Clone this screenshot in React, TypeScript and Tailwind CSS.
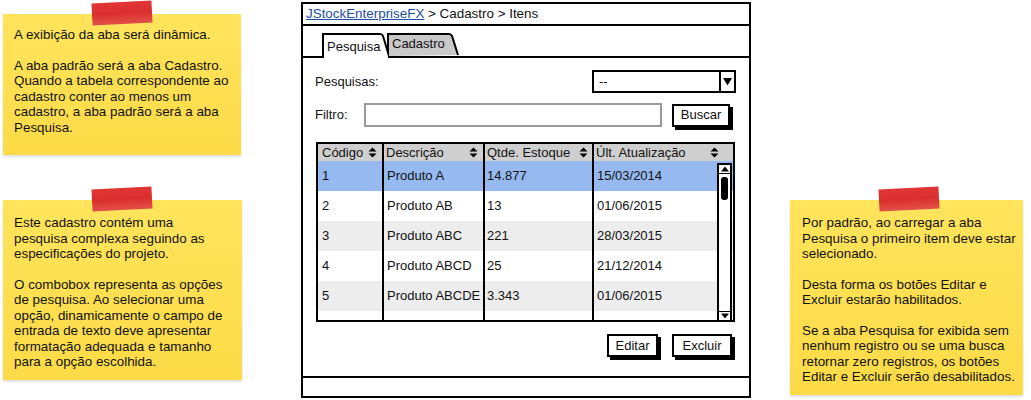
import React from 'react';

const rows = [
  { code: '1', desc: 'Produto A', qty: '14.877', date: '15/03/2014' },
  { code: '2', desc: 'Produto AB', qty: '13', date: '01/06/2015' },
  { code: '3', desc: 'Produto ABC', qty: '221', date: '28/03/2015' },
  { code: '4', desc: 'Produto ABCD', qty: '25', date: '21/12/2014' },
  { code: '5', desc: 'Produto ABCDE', qty: '3.343', date: '01/06/2015' },
  { code: '', desc: '', qty: '', date: '' },
];

function SortIcon() {
  return (
    <svg width="9" height="11" viewBox="0 0 9 11" className="shrink-0">
      <path d="M0.5 4.5 L4.5 0.5 L8.5 4.5 Z" fill="#000" />
      <path d="M0.5 6.5 L8.5 6.5 L4.5 10.5 Z" fill="#000" />
    </svg>
  );
}

function Tape({ left }: { left: string }) {
  return (
    <div
      className={`absolute -top-[12px] ${left} h-[22px] w-[60px] -rotate-[3deg] bg-gradient-to-b from-[#e02a2a] via-[#d92326] to-[#e0474a] opacity-95`}
    />
  );
}

function Note({
  className,
  tapeLeft,
  children,
}: {
  className: string;
  tapeLeft: string;
  children: React.ReactNode;
}) {
  return (
    <div
      className={`relative bg-gradient-to-b from-[#ffe45c] to-[#fddb47] shadow-[0_2px_2px_rgba(0,0,0,0.12)] ${className}`}
    >
      <Tape left={tapeLeft} />
      <div className="flex flex-col gap-[15px] text-[13.4px] leading-[15.5px]">{children}</div>
    </div>
  );
}

function SketchButton({ label, width }: { label: string; width: string }) {
  return (
    <div
      className={`flex h-[23px] ${width} items-center justify-center border-2 border-black bg-white shadow-[3px_3px_0_#000]`}
    >
      {label}
    </div>
  );
}

export default function App() {
  return (
    <div className="flex h-[400px] w-[1031px] overflow-hidden bg-white font-['Liberation_Sans',Arial,sans-serif] text-[13px] text-[#111]">
      {/* left notes */}
      <div className="flex w-[243px] shrink-0 flex-col pl-[3px]">
        <Note className="mt-[14px] h-[141px] w-[238px] pl-[11px] pt-[13px]" tapeLeft="left-[89px]">
          <p>A exibição da aba será dinâmica.</p>
          <p>
            A aba padrão será a aba Cadastro.
            <br />
            Quando a tabela correspondente ao
            <br />
            cadastro conter ao menos um
            <br />
            cadastro, a aba padrão será a aba
            <br />
            Pesquisa.
          </p>
        </Note>
        <Note className="mt-[45px] h-[180px] w-[239px] pl-[11px] pt-[15px]" tapeLeft="left-[89px]">
          <p>
            Este cadastro contém uma
            <br />
            pesquisa complexa seguindo as
            <br />
            especificações do projeto.
          </p>
          <p>
            O combobox representa as opções
            <br />
            de pesquisa. Ao selecionar uma
            <br />
            opção, dinamicamente o campo de
            <br />
            entrada de texto deve apresentar
            <br />
            formatação adequada e tamanho
            <br />
            para a opção escolhida.
          </p>
        </Note>
      </div>

      {/* window */}
      <div className="ml-[58px] mt-[2px] flex h-[396px] w-[450px] shrink-0 flex-col border-2 border-black bg-white">
        <div className="flex h-[22px] items-center border-b-2 border-black pl-[3px] text-[13.4px]">
          <span className="text-[#1d4ea3] underline">JStockEnterpriseFX</span>
          <span>&nbsp;&gt; Cadastro &gt; Itens</span>
        </div>

        {/* tabs */}
        <div className="flex h-[32px] items-end border-b-2 border-black pl-[19px]">
          <div className="relative z-10 -mb-[2px] flex h-[25px] w-[67px] items-center pl-[5px] pt-[2px]">
            <svg width="67" height="25" viewBox="0 0 67 25" className="absolute left-0 top-0">
              <path d="M1 25 L1 1 L58 1 Q60 1 61 3 L67 23 L67 25" fill="#fff" stroke="#000" strokeWidth="2" />
              <path d="M2 23 L66 23 L66 25 L2 25 Z" fill="#fff" />
            </svg>
            <span className="relative">Pesquisa</span>
          </div>
          <div className="relative -ml-[2px] flex h-[23px] w-[72px] items-center pb-[2px] pl-[5px]">
            <svg width="72" height="23" viewBox="0 0 72 23" className="absolute left-0 top-0">
              <path d="M1 23 L1 1 L62 1 Q64 1 65 3 L71 22" fill="#c9c9c9" stroke="#000" strokeWidth="2" />
            </svg>
            <span className="relative">Cadastro</span>
          </div>
        </div>

        {/* form */}
        <div className="mt-[12px] flex items-center justify-between pl-[12px] pr-[13px]">
          <span>Pesquisas:</span>
          <div className="flex h-[23px] w-[144px] border-2 border-black">
            <div className="flex flex-1 items-center pl-[5px]">--</div>
            <div className="flex w-[15px] items-center justify-center border-l-2 border-black">
              <svg width="9" height="9" viewBox="0 0 9 9">
                <path d="M0 1 L9 1 L4.5 8.5 Z" fill="#000" />
              </svg>
            </div>
          </div>
        </div>

        <div className="mt-[10px] flex items-center pl-[12px]">
          <span className="w-[49px]">Filtro:</span>
          <div className="h-[24px] w-[298px] border-2 border-[#9a9a9a] bg-white" />
          <div className="ml-[10px]">
            <SketchButton label="Buscar" width="w-[58px]" />
          </div>
        </div>

        {/* table */}
        <div className="relative ml-[13px] mt-[15px] h-[180px] w-[419px] overflow-hidden border-2 border-black">
          <div className="grid h-[17px] grid-cols-[66px_101px_109px_1fr] bg-[#cfcfcf] leading-[17px]">
            <div className="flex items-center justify-between border-r-2 border-black pl-[4px] pr-[5px]">
              <span>Código</span>
              <SortIcon />
            </div>
            <div className="flex items-center justify-between border-r-2 border-black pl-[2px] pr-[5px]">
              <span>Descrição</span>
              <SortIcon />
            </div>
            <div className="flex items-center justify-between border-r-2 border-black pl-[2px] pr-[4px]">
              <span>Qtde. Estoque</span>
              <SortIcon />
            </div>
            <div className="flex items-center justify-between pl-[2px] pr-[14px]">
              <span>Últ. Atualização</span>
              <SortIcon />
            </div>
          </div>
          {rows.map((r, i) => (
            <div
              key={i}
              className={`grid h-[30px] grid-cols-[66px_101px_109px_1fr] ${
                i === 0 ? 'bg-[#96baf0]' : i % 2 === 0 ? 'bg-[#ededed]' : 'bg-white'
              }`}
            >
              <div className="flex items-center border-r-2 border-black pl-[4px]">{r.code}</div>
              <div className="flex items-center border-r-2 border-black pl-[3px]">{r.desc}</div>
              <div className="flex items-center border-r-2 border-black pl-[2px]">{r.qty}</div>
              <div className="flex items-center pl-[3px]">{r.date}</div>
            </div>
          ))}

          {/* scrollbar */}
          <div className="absolute bottom-0 right-[1px] top-[19px] flex w-[15px] flex-col items-center border-2 border-b-0 border-black bg-white">
            <div className="flex h-[9px] w-full items-center justify-center border-b border-black">
              <svg width="8" height="6" viewBox="0 0 8 6">
                <path d="M0 5.5 L8 5.5 L4 0.5 Z" fill="#000" />
              </svg>
            </div>
            <div className="mt-[3px] h-[23px] w-[7px] rounded-[3px] bg-black" />
            <div className="flex-1" />
            <div className="flex h-[9px] w-full items-center justify-center border-t border-black">
              <svg width="8" height="6" viewBox="0 0 8 6">
                <path d="M0 0.5 L8 0.5 L4 5.5 Z" fill="#000" />
              </svg>
            </div>
          </div>
        </div>

        <div className="mt-[12px] flex justify-end gap-[14px] pr-[17px]">
          <SketchButton label="Editar" width="w-[51px]" />
          <SketchButton label="Excluir" width="w-[60px]" />
        </div>

        <div className="flex-1" />
        <div className="h-[20px] border-t-2 border-black" />
      </div>

      {/* right note */}
      <div className="ml-[39px] shrink-0">
        <Note className="mt-[200px] h-[195px] w-[233px] pl-[12px] pt-[15px]" tapeLeft="left-[89px]">
          <p>
            Por padrão, ao carregar a aba
            <br />
            Pesquisa o primeiro item deve estar
            <br />
            selecionado.
          </p>
          <p>
            Desta forma os botões Editar e
            <br />
            Excluir estarão habilitados.
          </p>
          <p>
            Se a aba Pesquisa for exibida sem
            <br />
            nenhum registro ou se uma busca
            <br />
            retornar zero registros, os botões
            <br />
            Editar e Excluir serão desabilitados.
          </p>
        </Note>
      </div>
    </div>
  );
}
